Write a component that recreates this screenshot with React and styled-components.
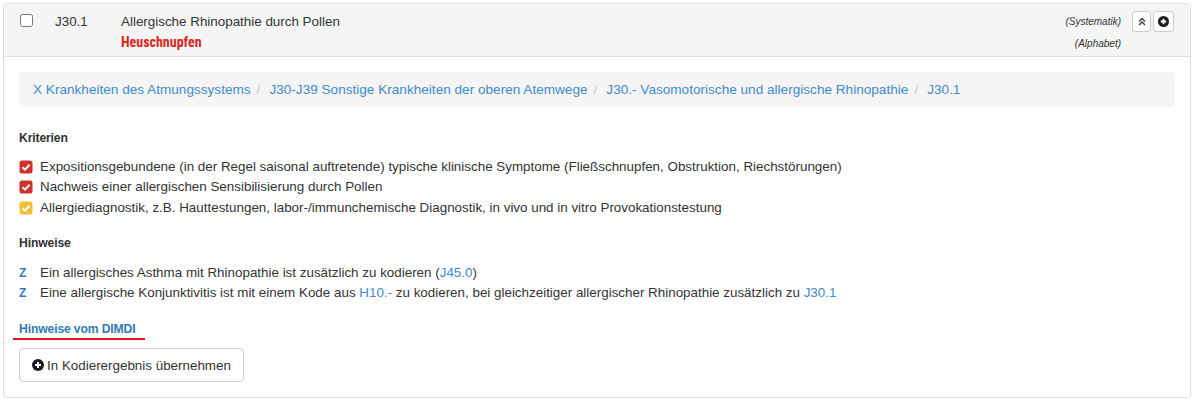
import React from "react";
import styled, { createGlobalStyle } from "styled-components";

const GlobalStyle = createGlobalStyle`
  body {
    margin: 0;
    padding: 3px 5px 3px 3px;
    background: #fff;
    font-family: "Liberation Sans", Arial, sans-serif;
    font-size: 13.4px;
    color: #333;
  }
`;

const Panel = styled.div`
  border: 1px solid #ddd;
  border-radius: 4px;
  background: #fff;
`;

const Header = styled.div`
  display: flex;
  align-items: flex-start;
  background: #f5f5f5;
  border-bottom: 1px solid #ddd;
  padding: 8px 16px 8px 16px;
  height: 36px;
  border-radius: 4px 4px 0 0;
`;

const Check = styled.input`
  margin: 2px 0 0 0;
  width: 13px;
  height: 13px;
`;

const Code = styled.div`
  width: 66px;
  margin-left: 22px;
  line-height: 20px;
`;

const TitleBlock = styled.div`
  flex: 1;
  display: flex;
  flex-direction: column;
`;

const Title = styled.div`
  line-height: 20px;
`;

const Synonym = styled.div`
  color: #d9261c;
  font-family: "Liberation Sans Narrow", "Roboto Condensed", "Liberation Sans", sans-serif;
  font-weight: bold;
  font-size: 14px;
  line-height: 18px;
  margin-top: 1px;
`;

const Refs = styled.div`
  display: flex;
  flex-direction: column;
  align-items: flex-end;
  font-size: 10px;
  font-style: italic;
  color: #333;
`;

const RefLine = styled.span`
  line-height: 20px;
  & + & {
    margin-top: 2px;
  }
`;

const Tools = styled.div`
  display: flex;
  gap: 2px;
  margin-left: 11px;
  margin-top: -1px;
`;

const ToolButton = styled.button`
  display: flex;
  align-items: center;
  justify-content: center;
  width: ${(p) => p.$w}px;
  height: 21px;
  padding: 0;
  background: #fff;
  border: 1px solid #ccc;
  border-radius: 3px;
`;

const Body = styled.div`
  padding: 15px 15px 15px 15px;
`;

const Crumbs = styled.ol`
  list-style: none;
  margin: 0;
  padding: 8px 14px;
  background: #f5f5f5;
  border-radius: 4px;
  display: flex;
  font-size: 13.6px;
  line-height: 19px;
`;

const Crumb = styled.li`
  color: #428bca;
  & + &::before {
    content: "/";
    color: #ccc;
    padding: 0 9px 0 6px;
  }
`;

const SectionTitle = styled.div`
  font-family: "Liberation Sans Narrow", "Liberation Sans", sans-serif;
  font-weight: bold;
  font-size: 12.2px;
  letter-spacing: -0.15px;
  line-height: 20px;
  margin-top: ${(p) => p.$top}px;
  margin-bottom: 9px;
`;

const List = styled.ul`
  list-style: none;
  margin: 0;
  padding: 0;
`;

const Item = styled.li`
  display: flex;
  align-items: center;
  line-height: 20px;
  height: ${(p) => p.$h || 20}px;
`;

const Marker = styled.span`
  width: 21px;
  flex: none;
  display: flex;
  align-items: center;
`;

const ZMark = styled.span`
  color: #337ab7;
  font-weight: bold;
  font-size: 12px;
`;

const Link = styled.span`
  color: #428bca;
`;

const DimdiLink = styled.div`
  margin-top: 17px;
  line-height: 18px;
`;

const DimdiText = styled.span`
  display: inline-block;
  color: #337ab7;
  font-family: "Liberation Sans Narrow", "Liberation Sans", sans-serif;
  font-weight: bold;
  font-size: 12.2px;
  letter-spacing: -0.15px;
  margin-left: -6px;
  padding: 0 9px 0 6px;
  border-bottom: 2px solid #e8141c;
`;

const ActionButton = styled.button`
  margin-top: 8px;
  display: inline-flex;
  align-items: center;
  gap: 3px;
  height: 34px;
  padding: 0 12px;
  background: #fff;
  border: 1px solid #ccc;
  border-radius: 4px;
  font-family: "Liberation Sans", Arial, sans-serif;
  font-size: 13.4px;
  color: #333;
`;

function CheckSquare({ color }) {
  return (
    <svg width="14" height="14" viewBox="0 0 14 14">
      <rect x="0.5" y="0.5" width="13" height="13" rx="2.5" fill={color} />
      <path d="M3.5 7.2 L6 9.6 L10.6 4.8" stroke="#fff" strokeWidth="2" fill="none" />
    </svg>
  );
}

function PlusCircle({ size = 12 }) {
  return (
    <svg width={size} height={size} viewBox="0 0 12 12">
      <circle cx="6" cy="6" r="6" fill="#1a1a1a" />
      <path d="M6 3 V9 M3 6 H9" stroke="#fff" strokeWidth="2" />
    </svg>
  );
}

function DoubleUp() {
  return (
    <svg width="8" height="9" viewBox="0 0 8 9">
      <path d="M1 4.5 L4 1.5 L7 4.5 M1 8 L4 5 L7 8" stroke="#3a3a3a" strokeWidth="1.4" fill="none" />
    </svg>
  );
}

const criteria = [
  { color: "#d0312d", text: "Expositionsgebundene (in der Regel saisonal auftretende) typische klinische Symptome (Fließschnupfen, Obstruktion, Riechstörungen)" },
  { color: "#d0312d", text: "Nachweis einer allergischen Sensibilisierung durch Pollen" },
  { color: "#f0c036", text: "Allergiediagnostik, z.B. Hauttestungen, labor-/immunchemische Diagnostik, in vivo und in vitro Provokationstestung", h: 21 },
];

const crumbs = [
  "X Krankheiten des Atmungssystems",
  "J30-J39 Sonstige Krankheiten der oberen Atemwege",
  "J30.- Vasomotorische und allergische Rhinopathie",
  "J30.1",
];

export default function App() {
  return (
    <>
      <GlobalStyle />
      <Panel>
        <Header>
          <Check type="checkbox" />
          <Code>J30.1</Code>
          <TitleBlock>
            <Title>Allergische Rhinopathie durch Pollen</Title>
            <Synonym>Heuschnupfen</Synonym>
          </TitleBlock>
          <Refs>
            <RefLine>(Systematik)</RefLine>
            <RefLine>(Alphabet)</RefLine>
          </Refs>
          <Tools>
            <ToolButton $w={19}>
              <DoubleUp />
            </ToolButton>
            <ToolButton $w={21}>
              <PlusCircle size={11} />
            </ToolButton>
          </Tools>
        </Header>
        <Body>
          <Crumbs>
            {crumbs.map((c) => (
              <Crumb key={c}>{c}</Crumb>
            ))}
          </Crumbs>

          <SectionTitle $top={21}>Kriterien</SectionTitle>
          <List>
            {criteria.map((c) => (
              <Item key={c.text} $h={c.h}>
                <Marker>
                  <CheckSquare color={c.color} />
                </Marker>
                {c.text}
              </Item>
            ))}
          </List>

          <SectionTitle $top={15}>Hinweise</SectionTitle>
          <List>
            <Item $h={21}>
              <Marker>
                <ZMark>Z</ZMark>
              </Marker>
              <span>
                Ein allergisches Asthma mit Rhinopathie ist zusätzlich zu kodieren (<Link>J45.0</Link>)
              </span>
            </Item>
            <Item>
              <Marker>
                <ZMark>Z</ZMark>
              </Marker>
              <span>
                Eine allergische Konjunktivitis ist mit einem Kode aus <Link>H10.-</Link> zu kodieren, bei
                gleichzeitiger allergischer Rhinopathie zusätzlich zu <Link>J30.1</Link>
              </span>
            </Item>
          </List>

          <DimdiLink>
            <DimdiText>Hinweise vom DIMDI</DimdiText>
          </DimdiLink>

          <ActionButton>
            <PlusCircle size={12} />
            In Kodierergebnis übernehmen
          </ActionButton>
        </Body>
      </Panel>
    </>
  );
}
